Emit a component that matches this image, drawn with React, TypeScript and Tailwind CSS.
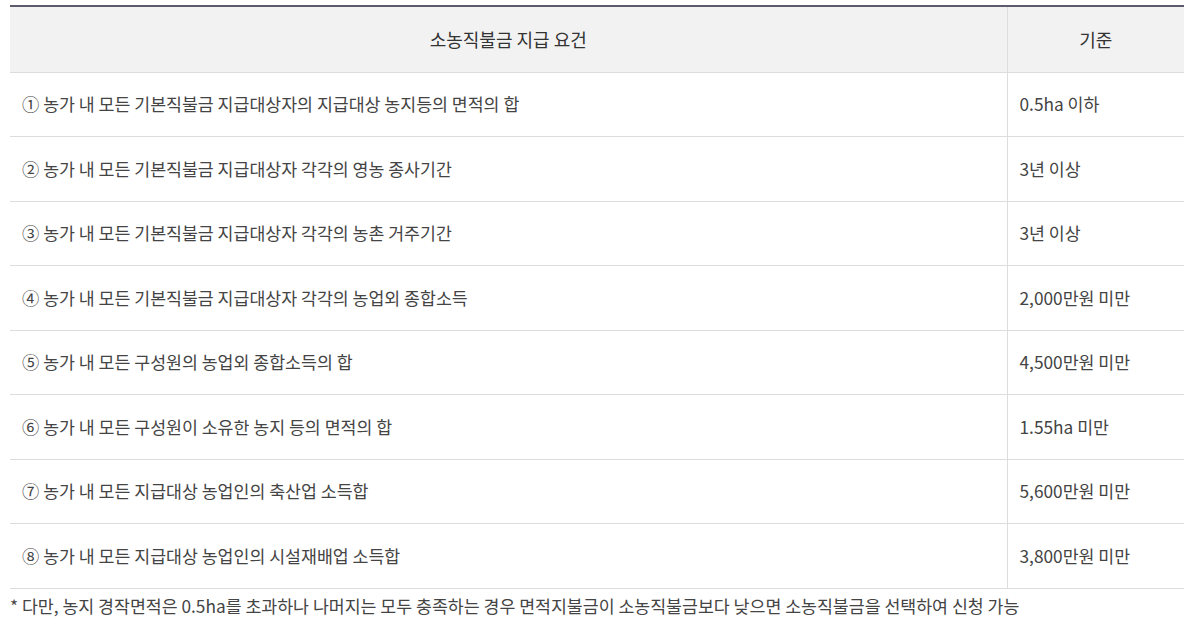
const rows: [string, string][] = [
  ["① 농가 내 모든 기본직불금 지급대상자의 지급대상 농지등의 면적의 합", "0.5ha 이하"],
  ["② 농가 내 모든 기본직불금 지급대상자 각각의 영농 종사기간", "3년 이상"],
  ["③ 농가 내 모든 기본직불금 지급대상자 각각의 농촌 거주기간", "3년 이상"],
  ["④ 농가 내 모든 기본직불금 지급대상자 각각의 농업외 종합소득", "2,000만원 미만"],
  ["⑤ 농가 내 모든 구성원의 농업외 종합소득의 합", "4,500만원 미만"],
  ["⑥ 농가 내 모든 구성원이 소유한 농지 등의 면적의 합", "1.55ha 미만"],
  ["⑦ 농가 내 모든 지급대상 농업인의 축산업 소득합", "5,600만원 미만"],
  ["⑧ 농가 내 모든 지급대상 농업인의 시설재배업 소득합", "3,800만원 미만"],
];

export default function App() {
  return (
    <div className="bg-white w-[1191px] h-[626px] pt-[5px] pl-[10px] text-[17.3px] text-[#444] font-['Noto_Sans_CJK_KR','Noto_Sans',sans-serif]">
      <table className="w-[1174px] border-collapse border-t-2 border-t-[#5b5b6b] table-fixed">
        <colgroup>
          <col className="w-[997px]" />
          <col />
        </colgroup>
        <thead>
          <tr className="h-[66px] bg-[#f2f2f2] border-b border-[#ddd]">
            <th className="font-normal text-[18px] text-center text-[#333] border-r border-[#ddd]">소농직불금 지급 요건</th>
            <th className="font-normal text-[18px] text-center text-[#333]">기준</th>
          </tr>
        </thead>
        <tbody>
          {rows.map(([req, std]) => (
            <tr key={req} className="h-[64.5px] border-b border-[#ddd]">
              <td className="pl-[12px] text-left border-r border-[#ddd]">{req}</td>
              <td className="pl-[12px] text-left">{std}</td>
            </tr>
          ))}
        </tbody>
      </table>
      <p className="mt-[5px] leading-[24px]">
        * 다만, 농지 경작면적은 0.5ha를 초과하나 나머지는 모두 충족하는 경우 면적지불금이 소농직불금보다 낮으면 소농직불금을 선택하여 신청 가능
      </p>
    </div>
  );
}
